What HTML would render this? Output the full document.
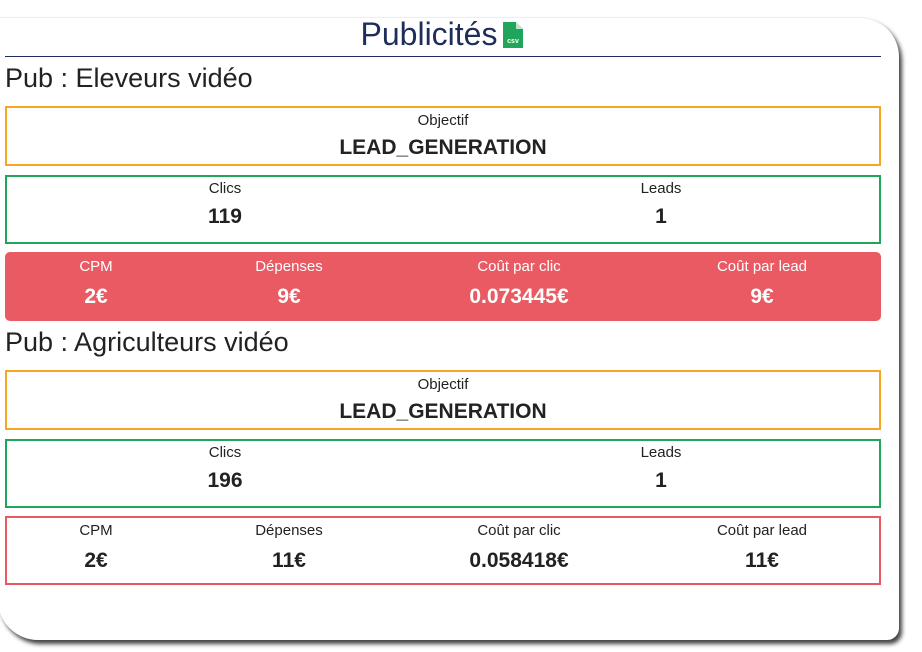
<!DOCTYPE html>
<html><head><meta charset="utf-8"><style>
*{margin:0;padding:0;box-sizing:border-box}
body{width:922px;height:652px;background:#fff;font-family:"Liberation Sans",sans-serif;color:#222;position:relative;overflow:hidden}
.card{position:absolute;left:-2px;top:17px;width:901px;height:623px;background:#fff;border-radius:0 40px 12px 40px;box-shadow:3px 4px 4px #444;border-top:1px solid #eee}
.title{position:absolute;left:0;width:884px;top:16px;text-align:center;font-size:32px;color:#1f2d5a}
.title svg{vertical-align:-3px;margin-left:6px}
.hr{position:absolute;left:5px;width:876px;top:56px;height:1px;background:#1f2d5a}
h2{position:absolute;left:5px;font-size:27px;font-weight:normal;color:#222}
.box{position:absolute;left:5px;width:876px;border:2px solid}
.o{border-color:#f5a623;height:60px}
.g{border-color:#1fa65a;height:69px}
.r{border-color:#e85a62;height:69px}
.rf{background:#e95a63;border-color:#e95a63;border-radius:5px;color:#fff;height:69px}
.c{position:absolute;width:300px;margin-left:-150px;text-align:center}
.l{font-size:15px;line-height:18px}
.v{font-size:21px;font-weight:bold;line-height:24px;margin-top:9px}
</style></head><body>
<div class="card"></div>
<div class="title">Publicités<svg width="20" height="26" viewBox="0 0 20 26"><path d="M0 0H13L20 7V26H0Z" fill="#1fa65a"/><path d="M13 0V7H20Z" fill="#fff" opacity=".7"/><text x="10" y="21" font-size="7" fill="#fff" text-anchor="middle" font-family="Liberation Sans" font-weight="bold">csv</text></svg></div>
<div class="hr"></div>

<h2 style="top:63px">Pub : Eleveurs vidéo</h2>
<div class="box o" style="top:106px"><div class="c" style="left:436px;top:4px"><div class="l">Objectif</div><div class="v" style="margin-top:6px">LEAD_GENERATION</div></div></div>
<div class="box g" style="top:175px"><div class="c" style="left:218px;top:3px"><div class="l">Clics</div><div class="v" style="margin-top:7px">119</div></div><div class="c" style="left:654px;top:3px"><div class="l">Leads</div><div class="v" style="margin-top:7px">1</div></div></div>
<div class="box rf" style="top:252px"><div class="c" style="left:89px;top:4px"><div class="l">CPM</div><div class="v">2€</div></div><div class="c" style="left:282px;top:4px"><div class="l">Dépenses</div><div class="v">9€</div></div><div class="c" style="left:512px;top:4px"><div class="l">Coût par clic</div><div class="v">0.073445€</div></div><div class="c" style="left:755px;top:4px"><div class="l">Coût par lead</div><div class="v">9€</div></div></div>

<h2 style="top:327px">Pub : Agriculteurs vidéo</h2>
<div class="box o" style="top:370px"><div class="c" style="left:436px;top:4px"><div class="l">Objectif</div><div class="v" style="margin-top:6px">LEAD_GENERATION</div></div></div>
<div class="box g" style="top:439px"><div class="c" style="left:218px;top:3px"><div class="l">Clics</div><div class="v" style="margin-top:7px">196</div></div><div class="c" style="left:654px;top:3px"><div class="l">Leads</div><div class="v" style="margin-top:7px">1</div></div></div>
<div class="box r" style="top:516px"><div class="c" style="left:89px;top:4px"><div class="l">CPM</div><div class="v">2€</div></div><div class="c" style="left:282px;top:4px"><div class="l">Dépenses</div><div class="v">11€</div></div><div class="c" style="left:512px;top:4px"><div class="l">Coût par clic</div><div class="v">0.058418€</div></div><div class="c" style="left:755px;top:4px"><div class="l">Coût par lead</div><div class="v">11€</div></div></div>
</body></html>
